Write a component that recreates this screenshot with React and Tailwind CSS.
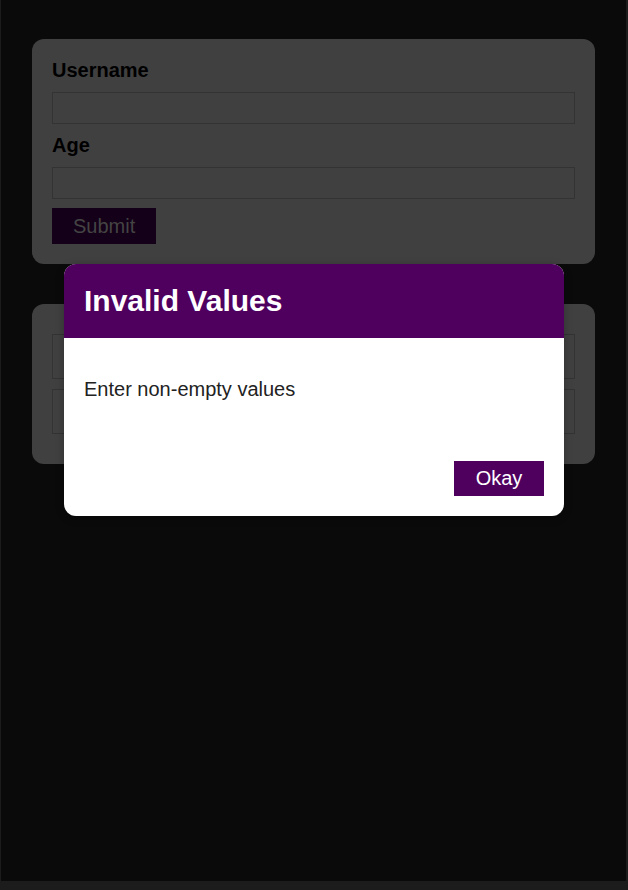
const users = [{ id: "u1" }, { id: "u2" }];

function Field({ label, last }) {
  return (
    <div>
      <label className="block font-bold text-black mb-[10px] leading-[23px]">{label}</label>
      <div className={last ? "h-[32px] border border-[#333] mb-[9px]" : "h-[32px] border border-[#333] mb-[10px]"} />
    </div>
  );
}

export default function App() {
  return (
    <div
      className="w-[628px] h-[890px] bg-[#1c1c1c] pl-[1px] pr-[2px] pb-[9px] text-[20px]"
      style={{ fontFamily: '"Liberation Sans", Arial, sans-serif' }}
    >
      <div className="relative h-[881px] bg-[#0a0a0a] pt-[39px]">
        <div className="mx-auto w-[563px] rounded-[12px] bg-[#404040] p-[20px]">
          <Field label="Username" />
          <Field label="Age" last />
          <button className="h-[36px] px-[20px] bg-[#140018] border border-[#140018] text-[#444] leading-[23px]">
            Submit
          </button>
        </div>

        <div className="mx-auto mt-[40px] w-[563px] rounded-[12px] bg-[#404040] px-[20px] py-[20px]">
          <ul className="flex flex-col gap-[10px] py-[10px]">
            {users.map((u) => (
              <li key={u.id} className="h-[45px] border border-[#333]" />
            ))}
          </ul>
        </div>

        <div className="absolute left-[63px] top-[264px] w-[500px] rounded-[12px] overflow-hidden bg-white shadow-[0_2px_8px_rgba(0,0,0,0.26)]">
          <header className="bg-[#4f005f] px-[20px] py-[20px]">
            <h2 className="text-white font-bold text-[30px] leading-[34px]">Invalid Values</h2>
          </header>
          <div className="px-[20px] pt-[40px] pb-[40px]">
            <p className="text-[#222] text-[20px] leading-[23px]">Enter non-empty values</p>
          </div>
          <footer className="flex justify-end p-[20px]">
            <button className="h-[35px] w-[90px] bg-[#4f005f] text-white leading-[23px]">
              Okay
            </button>
          </footer>
        </div>
      </div>
    </div>
  );
}
